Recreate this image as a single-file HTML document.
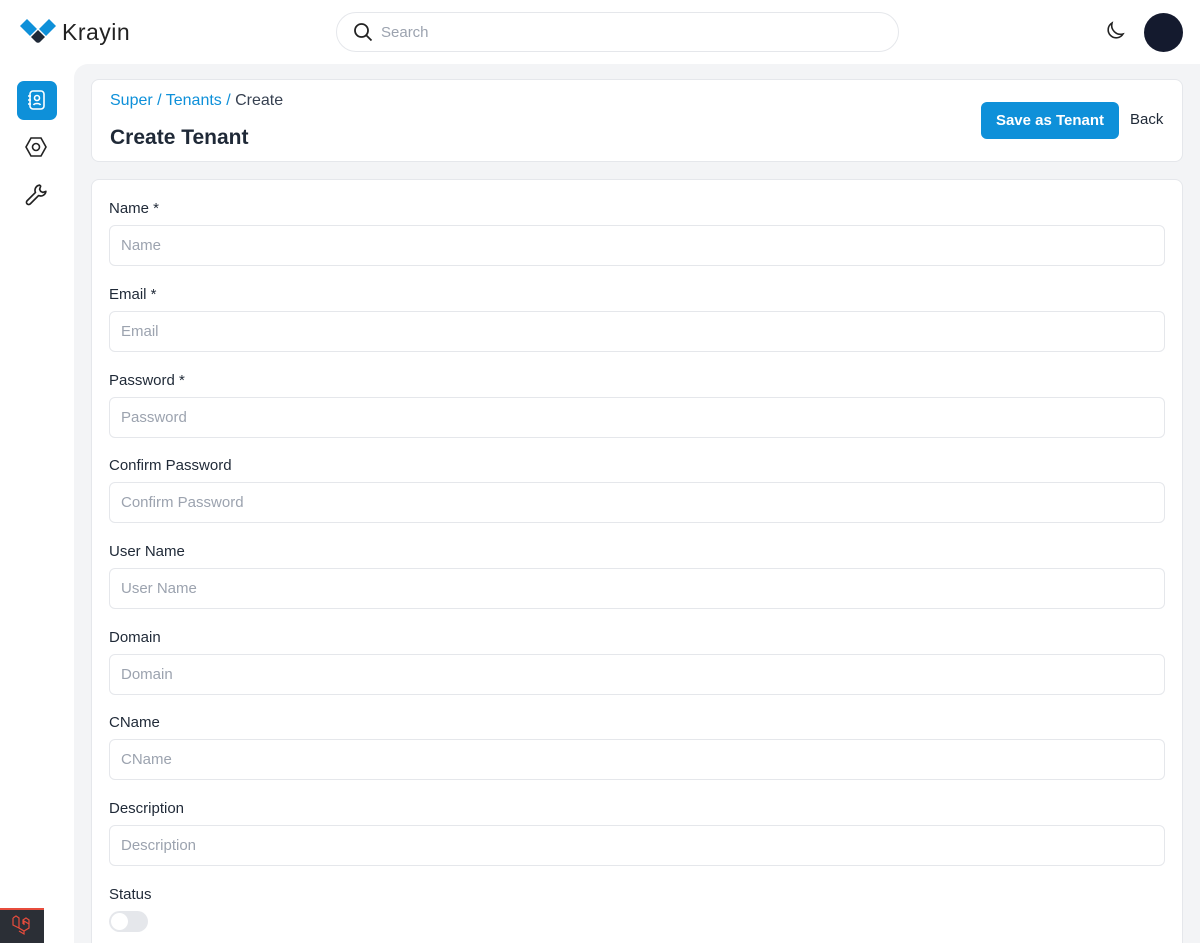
<!DOCTYPE html>
<html><head><meta charset="utf-8"><style>
*{box-sizing:border-box;margin:0;padding:0}
html,body{width:1200px;height:943px;overflow:hidden}
body{background:#fff;font-family:"Liberation Sans",sans-serif;color:#1f2937;position:relative}
.hdr{position:absolute;left:0;top:0;width:1200px;height:64px;background:#fff}
.logo{position:absolute;left:20px;top:18px;display:flex;align-items:center}
.logo span{font-size:23px;color:#222;margin-left:6px;letter-spacing:.5px}
.search{position:absolute;left:336px;top:12px;width:563px;height:40px;border:1px solid #e5e7eb;border-radius:20px}
.search span{position:absolute;left:44px;top:11px;font-size:15px;color:#9ca3af}
.main{position:absolute;left:74px;top:64px;width:1126px;height:879px;background:#f3f4f6;border-top-left-radius:14px;overflow:hidden}
.card{position:absolute;background:#fff;border:1px solid #e5e7eb;border-radius:8px}
.lbl{position:absolute;left:17px;font-size:15px;color:#1f2937}
.inp{position:absolute;left:17px;width:1056px;height:41px;border:1px solid #e5e7eb;border-radius:6px}
.inp span{position:absolute;left:11px;top:11px;font-size:15px;color:#9ca3af}
</style></head><body>
<div class="hdr">
 <div class="logo">
  <svg width="36" height="28" viewBox="0 0 36 28"><path d="M0 8l7-7 10 10-7 7z" fill="#0e90d9"/><path d="M19 11l10-10 7 7-10 10z" fill="#0e90d9"/><path d="M11 19l7-7 7 7-5 5a3 3 0 0 1-4 0z" fill="#1f2937"/></svg>
  <span>Krayin</span>
 </div>
 <div class="search"><svg style="position:absolute;left:16px;top:9px" width="20" height="20" viewBox="0 0 20 20" fill="none" stroke="#222" stroke-width="1.8"><circle cx="8.5" cy="8.5" r="6.5"/><path d="M13.5 13.5l5 5"/></svg><span>Search</span></div>
 <svg style="position:absolute;left:1102px;top:20px" width="24" height="24" viewBox="0 0 24 24" fill="none" stroke="#222" stroke-width="1.6"><path d="M10 3a8 8 0 1 0 11 11A9 9 0 0 1 10 3z"/></svg>
 <div style="position:absolute;left:1144px;top:13px;width:39px;height:39px;border-radius:50%;background:#141a2e"></div>
</div>
<div style="position:absolute;left:17px;top:81px;width:40px;height:39px;border-radius:7px;background:#0e90d9"></div>
<svg style="position:absolute;left:25px;top:88px" width="24" height="24" viewBox="0 0 24 24" fill="none" stroke="#fff" stroke-width="1.6"><rect x="5" y="3" width="14" height="18" rx="3"/><circle cx="12" cy="10" r="2.5"/><path d="M8.5 17c1-2 6-2 7 0M3 8h3M3 12h3M3 16h3"/></svg>
<svg style="position:absolute;left:24px;top:135px" width="24" height="24" viewBox="0 0 24 24" fill="none" stroke="#222" stroke-width="1.6"><path d="M7 3h10l5 9-5 9H7l-5-9z"/><circle cx="12" cy="12" r="3.5"/></svg>
<svg style="position:absolute;left:24px;top:182px" width="25" height="25" viewBox="0 0 24 24" fill="none" stroke="#222" stroke-width="1.6" stroke-linejoin="round"><path d="M15 3a5 5 0 0 0-4 7l-8 8a2 2 0 0 0 3 3l8-8a5 5 0 0 0 7-4l-3 1-2-1-1-2 1-3a5 5 0 0 0-1-1z"/></svg>
<div style="position:absolute;left:0;top:908px;width:44px;height:35px;background:#2b2f36;border-top:2px solid #e74c3c"></div>
<svg style="position:absolute;left:11px;top:914px" width="22" height="22" viewBox="0 0 22 22" fill="none" stroke="#e74c3c" stroke-width="1.2"><path d="M2 4l3-2 3 2v10l5 3 5-3v-4l-5-3v4M8 14l-6-3V4M13 17v3l-5-3M18 10V6l-3-2-3 2v4"/></svg>
<div class="main">
 <div class="card" style="left:17px;top:15px;width:1092px;height:83px">
  <div style="position:absolute;left:18px;top:12px;font-size:16px;color:#0e90d9">Super / Tenants / <span style="color:#374151">Create</span></div>
  <div style="position:absolute;left:18px;top:46px;font-size:21px;font-weight:bold;color:#1f2937">Create Tenant</div>
  <div style="position:absolute;left:889px;top:22px;width:138px;height:37px;background:#0e90d9;border-radius:6px;color:#fff;font-weight:bold;font-size:15px;text-align:center;line-height:37px">Save as Tenant</div>
  <div style="position:absolute;left:1038px;top:31px;font-size:15px;color:#1f2937">Back</div>
 </div>
 <div class="card" style="left:17px;top:115px;width:1092px;height:800px">
  <div class="lbl" style="top:20px">Name *</div><div class="inp" style="top:45px"><span>Name</span></div>
  <div class="lbl" style="top:106px">Email *</div><div class="inp" style="top:131px"><span>Email</span></div>
  <div class="lbl" style="top:192px">Password *</div><div class="inp" style="top:217px"><span>Password</span></div>
  <div class="lbl" style="top:277px">Confirm Password</div><div class="inp" style="top:302px"><span>Confirm Password</span></div>
  <div class="lbl" style="top:363px">User Name</div><div class="inp" style="top:388px"><span>User Name</span></div>
  <div class="lbl" style="top:449px">Domain</div><div class="inp" style="top:474px"><span>Domain</span></div>
  <div class="lbl" style="top:534px">CName</div><div class="inp" style="top:559px"><span>CName</span></div>
  <div class="lbl" style="top:620px">Description</div><div class="inp" style="top:645px"><span>Description</span></div>
  <div class="lbl" style="top:706px">Status</div>
  <div style="position:absolute;left:17px;top:731px;width:39px;height:21px;border-radius:11px;background:#e5e7eb"><div style="position:absolute;left:2px;top:2px;width:17px;height:17px;border-radius:50%;background:#fff"></div></div>
 </div>
</div>
</body></html>
